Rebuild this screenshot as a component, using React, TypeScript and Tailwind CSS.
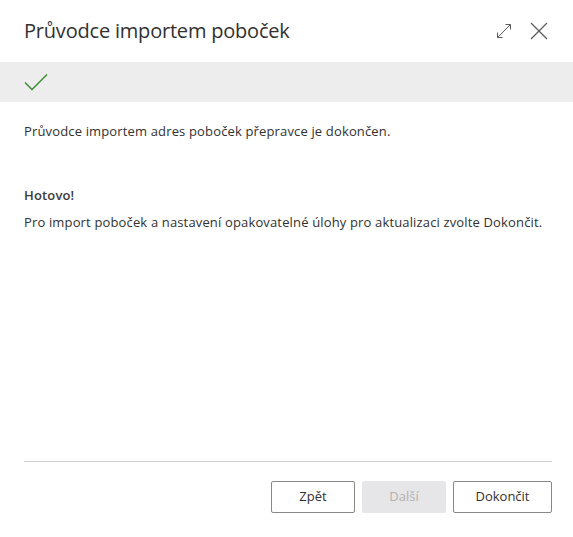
function ExpandIcon() {
  return (
    <svg width="16" height="16" viewBox="0 0 16 16" fill="none" stroke="#605e5c" strokeWidth="1">
      <path d="M1.5 14.5 L14.5 1.5" />
      <path d="M9.5 1.5 H14.5 V6.5" />
      <path d="M1.5 9.5 V14.5 H6.5" />
    </svg>
  );
}

function CloseIcon() {
  return (
    <svg width="18" height="18" viewBox="0 0 18 18" fill="none" stroke="#605e5c" strokeWidth="1.2">
      <path d="M1 1 L17 17" />
      <path d="M17 1 L1 17" />
    </svg>
  );
}

export default function App() {
  return (
    <div
      className="w-[573px] h-[537px] bg-white flex flex-col text-[#323130]"
      style={{ fontFamily: '"Open Sans", "Noto Sans", sans-serif' }}
    >
      <div className="h-[62px] flex items-center justify-between pl-6 pr-[25px]">
        <h1 className="text-[20px] leading-none tracking-[-0.2px] text-[#323130]">Průvodce importem poboček</h1>
        <div className="flex items-center gap-[18px]">
          <ExpandIcon />
          <CloseIcon />
        </div>
      </div>

      <div className="h-[40px] bg-[#ededed] flex items-center pl-6">
        <svg width="24" height="18" viewBox="0 0 24 18" fill="none" stroke="#3a8a2e" strokeWidth="1.4">
          <path d="M1 9.5 L8 16.5 L23 1.5" />
        </svg>
      </div>

      <div className="flex-1 px-6 pt-[20px] text-[13px] tracking-[0.15px]">
        <p>Průvodce importem adres poboček přepravce je dokončen.</p>
        <p className="mt-[44px] font-semibold text-[#3b3a39]">Hotovo!</p>
        <p className="mt-[8px]">Pro import poboček a nastavení opakovatelné úlohy pro aktualizaci zvolte Dokončit.</p>
      </div>

      <div className="ml-6 mr-[21px] border-t border-[#d2d0ce]" />
      <div className="flex justify-end gap-[7px] px-[21px] pt-[19px] pb-[24px]">
        <button className="w-[84px] h-[32px] border border-[#8a8886] rounded-[2px] text-[13px] bg-white">Zpět</button>
        <button className="w-[84px] h-[32px] rounded-[2px] text-[13px] bg-[#e6e6e8] text-[#b3b0ad]">Další</button>
        <button className="w-[99px] h-[32px] border border-[#8a8886] rounded-[2px] text-[13px] bg-white">Dokončit</button>
      </div>
    </div>
  );
}
